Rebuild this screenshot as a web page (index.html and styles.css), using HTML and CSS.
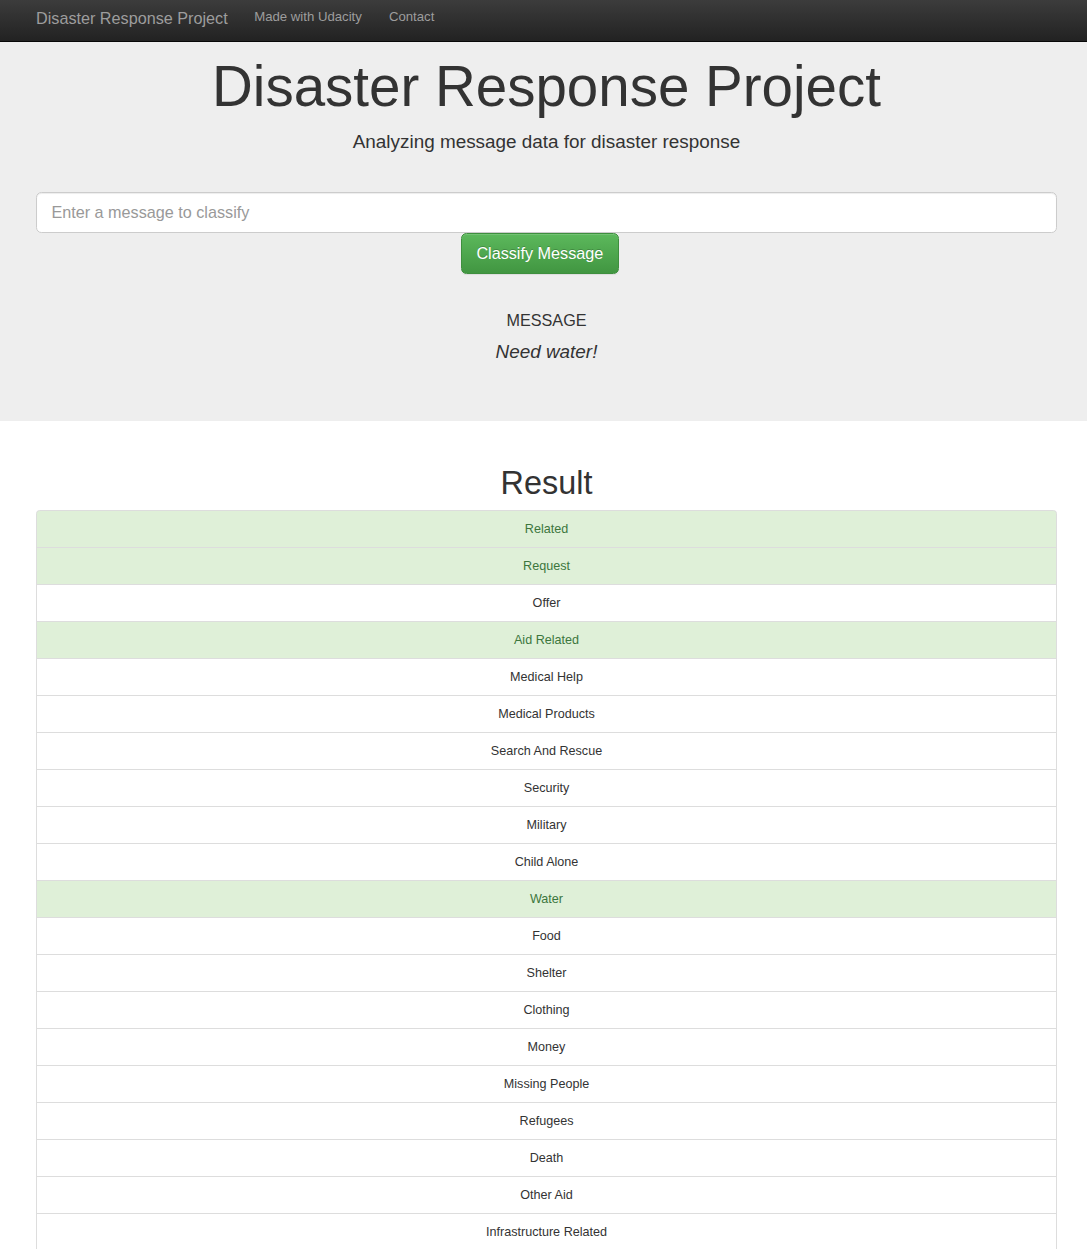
FILE: index.html
```html
<!DOCTYPE html>
<html lang="en">
<head>
<meta charset="utf-8">
<title>Disaster Response Project</title>
<link rel="stylesheet" href="styles.css">
</head>
<body>
<nav class="navbar">
  <div class="container navbar-inner">
    <a class="brand" href="#">Disaster Response Project</a>
    <a class="nav-link" href="#">Made with Udacity</a>
    <a class="nav-link" href="#">Contact</a>
  </div>
</nav>

<div class="jumbotron">
  <div class="container">
    <h1 class="title">Disaster Response Project</h1>
    <p class="subtitle">Analyzing message data for disaster response</p>
    <form class="classify-form">
      <input class="form-control" type="text" placeholder="Enter a message to classify">
      <div class="button-row">
        <button type="button" class="btn-success">Classify Message</button>
      </div>
    </form>
    <div class="message-block">
      <div class="message-label">MESSAGE</div>
      <div class="message-text">Need water!</div>
    </div>
  </div>
</div>

<div class="container results">
  <h1 class="result-title">Result</h1>
  <ul class="list-group">
    <li class="list-group-item success">Related</li>
    <li class="list-group-item success">Request</li>
    <li class="list-group-item">Offer</li>
    <li class="list-group-item success">Aid Related</li>
    <li class="list-group-item">Medical Help</li>
    <li class="list-group-item">Medical Products</li>
    <li class="list-group-item">Search And Rescue</li>
    <li class="list-group-item">Security</li>
    <li class="list-group-item">Military</li>
    <li class="list-group-item">Child Alone</li>
    <li class="list-group-item success">Water</li>
    <li class="list-group-item">Food</li>
    <li class="list-group-item">Shelter</li>
    <li class="list-group-item">Clothing</li>
    <li class="list-group-item">Money</li>
    <li class="list-group-item">Missing People</li>
    <li class="list-group-item">Refugees</li>
    <li class="list-group-item">Death</li>
    <li class="list-group-item">Other Aid</li>
    <li class="list-group-item">Infrastructure Related</li>
  </ul>
</div>
</body>
</html>
```

FILE: styles.css
```css
* {
  box-sizing: border-box;
}

html, body {
  margin: 0;
  padding: 0;
}

body {
  font-family: "Liberation Sans", Arial, Helvetica, sans-serif;
  font-size: 12.6px;
  line-height: 18px;
  color: #333;
  background: #fff;
}

a {
  text-decoration: none;
}

.container {
  margin: 0 30px 0 36px;
}

/* Navbar */
.navbar {
  height: 42px;
  background: linear-gradient(to bottom, #3c3c3c 0%, #222 100%);
  border-bottom: 1px solid #080808;
}

.navbar-inner {
  display: flex;
  align-items: flex-start;
  height: 41px;
}

.brand {
  color: #9d9d9d;
  font-size: 16.2px;
  line-height: 18px;
  padding-top: 9px;
  padding-right: 13px;
}

.nav-link {
  color: #9d9d9d;
  font-size: 13.2px;
  line-height: 18px;
  padding: 8px 13.5px 0;
}

/* Jumbotron */
.jumbotron {
  background: #eee;
  padding-top: 14px;
  height: 379px;
}

.title {
  margin: 0;
  font-size: 56.5px;
  line-height: 62px;
  font-weight: 500;
  text-align: center;
  color: #333;
}

.subtitle {
  margin: 10px 0 0;
  font-size: 18.9px;
  line-height: 27px;
  text-align: center;
}

.classify-form {
  margin-top: 37px;
}

.form-control {
  display: block;
  width: 100%;
  height: 41px;
  padding: 9px 14.4px;
  font-family: inherit;
  font-size: 16.2px;
  line-height: 1.33;
  color: #555;
  background: #fff;
  border: 1px solid #ccc;
  border-radius: 5.4px;
  box-shadow: inset 0 1px 1px rgba(0, 0, 0, 0.075);
  outline: none;
}

.form-control::placeholder {
  color: #999;
}

.button-row {
  padding-left: 425px;
}

.btn-success {
  display: block;
  height: 41px;
  padding: 0 14.4px;
  font-family: inherit;
  font-size: 16.2px;
  line-height: 39px;
  color: #fff;
  text-shadow: 0 -1px 0 rgba(0, 0, 0, 0.2);
  background: linear-gradient(to bottom, #5cb85c 0%, #419641 100%);
  border: 1px solid #3e8f3e;
  border-radius: 5.4px;
  box-shadow: inset 0 1px 0 rgba(255, 255, 255, 0.15), 0 1px 1px rgba(0, 0, 0, 0.075);
  cursor: pointer;
}

.message-block {
  margin-top: 37px;
  text-align: center;
}

.message-label {
  font-size: 16.2px;
  line-height: 18px;
}

.message-text {
  margin-top: 12px;
  font-size: 18.9px;
  line-height: 21px;
  font-style: italic;
}

/* Results */
.results {
  padding-top: 44px;
}

.result-title {
  margin: 0 0 9px;
  font-size: 32.4px;
  line-height: 36px;
  font-weight: 500;
  text-align: center;
}

.list-group {
  list-style: none;
  margin: 0 0 18px;
  padding: 0;
}

.list-group-item {
  position: relative;
  display: block;
  padding: 9px 13.5px;
  margin-bottom: -1px;
  background: #fff;
  border: 1px solid #ddd;
  text-align: center;
}

.list-group-item:first-child {
  border-top-left-radius: 3.6px;
  border-top-right-radius: 3.6px;
}

.list-group-item:last-child {
  margin-bottom: 0;
}

.list-group-item.success {
  color: #3c763d;
  background: #dff0d8;
}
```
